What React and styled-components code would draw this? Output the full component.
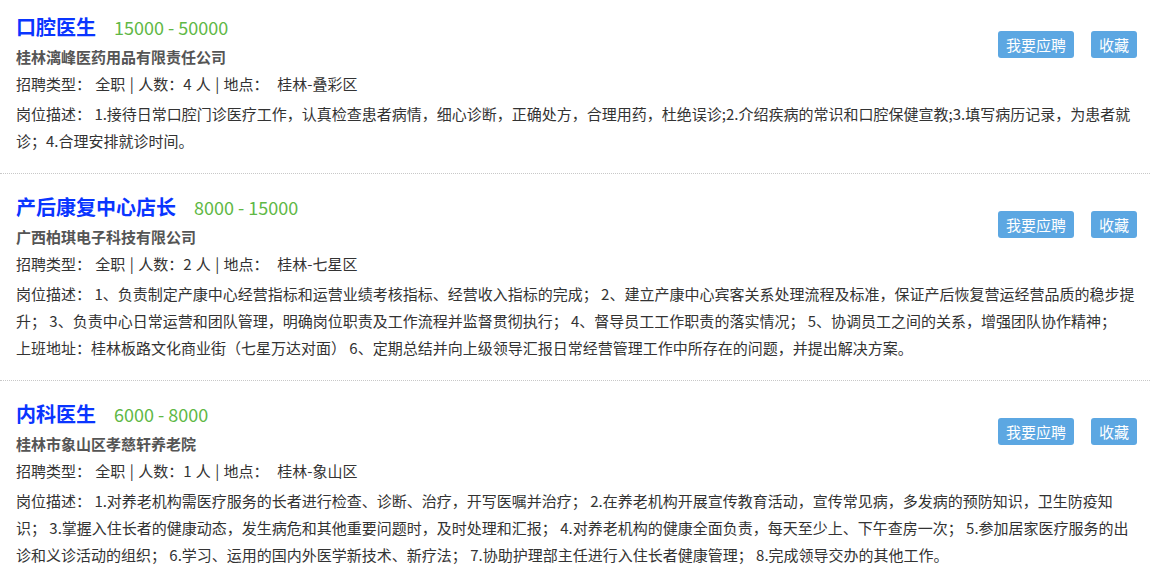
import React from 'react'
import styled, { createGlobalStyle } from 'styled-components'

const GlobalStyle = createGlobalStyle`
  body {
    margin: 0;
    background: #fff;
    font-family: "Noto Sans CJK SC", "Noto Sans", sans-serif;
    color: #333;
  }
`

const JobList = styled.div`
  width: 1150px;
`

const JobItem = styled.div`
  padding: 16px 13px 19px 16px;
  border-bottom: 1px dotted #c8c8c8;

  &:first-child {
    padding-top: 10px;
  }

  &:last-child {
    border-bottom: none;
  }
`

const JobHeader = styled.div`
  display: flex;
  justify-content: space-between;
  align-items: flex-start;
`

const JobMain = styled.div`
  display: flex;
  flex-direction: column;
`

const TitleRow = styled.div`
  display: flex;
  align-items: baseline;
  height: 34px;
  line-height: 34px;
`

const JobTitle = styled.span`
  font-size: 20px;
  font-weight: bold;
  color: #0a35ff;
`

const Salary = styled.span`
  margin-left: 18px;
  font-size: 18px;
  color: #60b846;
`

const Company = styled.div`
  font-size: 15px;
  font-weight: bold;
  color: #555;
  line-height: 26px;
`

const Info = styled.div`
  font-size: 15px;
  line-height: 28px;
  color: #333;
  word-spacing: 1px;
`

const Actions = styled.div`
  display: flex;
  gap: 17px;
  margin-top: 21px;
`

const ActionButton = styled.button`
  height: 27px;
  padding: 0 8px;
  border: none;
  border-radius: 3px;
  background: #5ca7e2;
  color: #fff;
  font-family: inherit;
  font-size: 15px;
  line-height: 27px;
  cursor: pointer;
`

const Description = styled.div`
  margin-top: 2px;
  font-size: 15px;
  line-height: 27px;
  color: #333;
`

const jobs = [
  {
    title: '口腔医生',
    salary: '15000 - 50000',
    company: '桂林漓峰医药用品有限责任公司',
    count: 4,
    place: '桂林-叠彩区',
    desc: ['1.接待日常口腔门诊医疗工作，认真检查患者病情，细心诊断，正确处方，合理用药，杜绝误诊;2.介绍疾病的常识和口腔保健宣教;3.填写病历记录，为患者就诊；4.合理安排就诊时间。']
  },
  {
    title: '产后康复中心店长',
    salary: '8000 - 15000',
    company: '广西柏琪电子科技有限公司',
    count: 2,
    place: '桂林-七星区',
    desc: [
      '1、负责制定产康中心经营指标和运营业绩考核指标、经营收入指标的完成； 2、建立产康中心宾客关系处理流程及标准，保证产后恢复营运经营品质的稳步提升； 3、负责中心日常运营和团队管理，明确岗位职责及工作流程并监督贯彻执行； 4、督导员工工作职责的落实情况； 5、协调员工之间的关系，增强团队协作精神；',
      '上班地址：桂林板路文化商业街（七星万达对面） 6、定期总结并向上级领导汇报日常经营管理工作中所存在的问题，并提出解决方案。'
    ]
  },
  {
    title: '内科医生',
    salary: '6000 - 8000',
    company: '桂林市象山区孝慈轩养老院',
    count: 1,
    place: '桂林-象山区',
    desc: ['1.对养老机构需医疗服务的长者进行检查、诊断、治疗，开写医嘱并治疗； 2.在养老机构开展宣传教育活动，宣传常见病，多发病的预防知识，卫生防疫知识； 3.掌握入住长者的健康动态，发生病危和其他重要问题时，及时处理和汇报； 4.对养老机构的健康全面负责，每天至少上、下午查房一次； 5.参加居家医疗服务的出诊和义诊活动的组织； 6.学习、运用的国内外医学新技术、新疗法； 7.协助护理部主任进行入住长者健康管理； 8.完成领导交办的其他工作。']
  }
]

export default function App() {
  return (
    <>
      <GlobalStyle />
      <JobList>
        {jobs.map(job => (
          <JobItem key={job.title}>
            <JobHeader>
              <JobMain>
                <TitleRow>
                  <JobTitle>{job.title}</JobTitle>
                  <Salary>{job.salary}</Salary>
                </TitleRow>
                <Company>{job.company}</Company>
                <Info>
                  招聘类型： 全职 | 人数：{job.count} 人 | 地点：&nbsp; {job.place}
                </Info>
              </JobMain>
              <Actions>
                <ActionButton>我要应聘</ActionButton>
                <ActionButton>收藏</ActionButton>
              </Actions>
            </JobHeader>
            <Description>
              岗位描述： {job.desc[0]}
              {job.desc[1] && <><br />{job.desc[1]}</>}
            </Description>
          </JobItem>
        ))}
      </JobList>
    </>
  )
}
